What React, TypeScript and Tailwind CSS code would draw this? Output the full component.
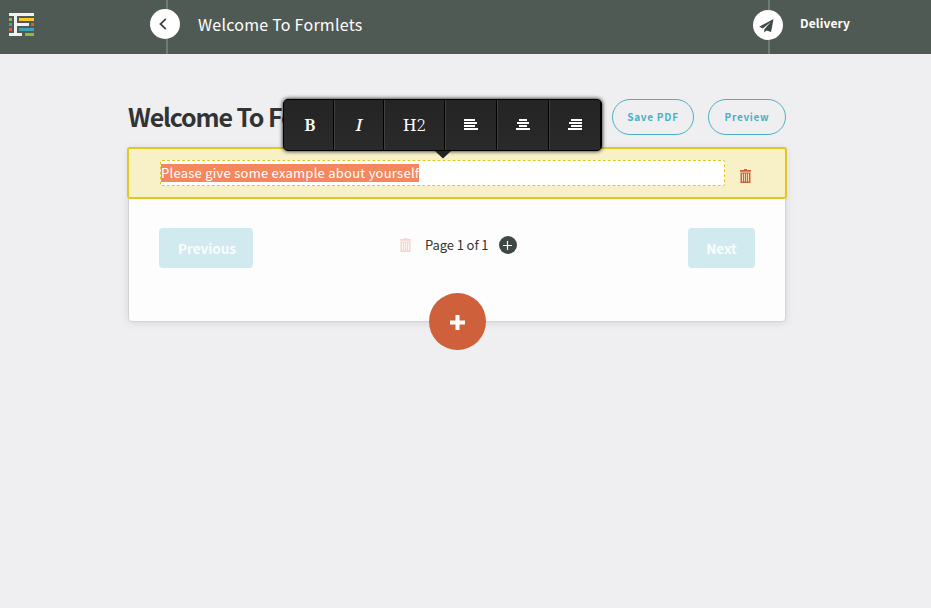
const source = "font-['Noto_Sans_CJK_SC','Open_Sans',sans-serif]";

function Logo() {
  const bars: [number, number, number, number, string][] = [
    [9, 13, 25, 3, "#f1f1f0"],
    [14, 13, 3, 23, "#f1f1f0"],
    [14, 23, 15, 3, "#f1f1f0"],
    [9, 33, 13, 3, "#f1f1f0"],
    [9, 18, 3, 3, "#8fba3c"],
    [9, 23, 3, 3, "#41a1b5"],
    [9, 28, 3, 3, "#ee5544"],
    [19, 18, 15, 3, "#fdc72f"],
    [31, 23, 3, 3, "#ee5544"],
    [19, 28, 15, 3, "#41a1b5"],
    [25, 33, 9, 3, "#8fba3c"],
  ];
  return (
    <svg width="25" height="23" viewBox="9 13 25 23" shapeRendering="crispEdges">
      {bars.map(([x, y, w, h, c]) => (
        <rect key={`${x}-${y}-${w}`} x={x} y={y} width={w} height={h} fill={c} />
      ))}
    </svg>
  );
}

function Trash({ className }: { className: string }) {
  return (
    <svg width="11" height="14" viewBox="0 0 11 14" fill="currentColor" className={className}>
      <path d="M4 0h3v1h4v1.7H0V1h4z" />
      <path fillRule="evenodd" d="M.5 3.4h10V14H.5zM2.1 4.6v8h.9v-8zM4.2 4.6v8h.8v-8zM6.1 4.6v8h.8v-8zM8 4.6v8h.9v-8z" />
    </svg>
  );
}

function AlignIcon({ rows }: { rows: [number, number][] }) {
  return (
    <svg width="14" height="11" viewBox="0 0 14 11" fill="#fff" shapeRendering="crispEdges" className="-mt-px">
      {rows.map(([x, w], i) => (
        <rect key={i} x={x} y={i * 3} width={w} height="2" />
      ))}
    </svg>
  );
}

function Toolbar() {
  const cell = "flex h-full items-center justify-center border-r border-black bg-linear-to-b from-[#242424] to-[#2a2a2a] leading-6";
  const sep = " border-l border-l-[#404040]";
  return (
    <div className="absolute top-[99px] left-[283px] z-10 h-[52px] w-[319px] rounded-[5px] border border-black bg-black shadow-[0_0_4px_#000] font-['Noto_Serif','Liberation_Serif',serif] text-[17px] text-white">
      <div className="flex h-full overflow-hidden rounded-[4px]">
        <div className={cell + " w-[50px] pl-[3px] font-semibold"}>B</div>
        <div className={cell + sep + " w-[50px] font-medium italic"}>I</div>
        <div className={cell + sep + " w-[61px]"}>
          H<span className="font-light">2</span>
        </div>
        <div className={cell + sep + " w-[52px]"}>
          <AlignIcon rows={[[0, 11], [0, 13], [0, 11], [0, 14]]} />
        </div>
        <div className={cell + sep + " w-[52px]"}>
          <AlignIcon rows={[[3, 8], [1, 12], [3, 8], [0, 14]]} />
        </div>
        <div className={cell + sep + " w-[52px]"}>
          <AlignIcon rows={[[3, 11], [1, 13], [3, 11], [0, 14]]} />
        </div>
      </div>
      <svg className="absolute top-[51px] left-[151px]" width="16" height="8" viewBox="0 0 16 8" fill="#242424">
        <path d="M0 0h16L8 7.5z" />
      </svg>
    </div>
  );
}

export default function App() {
  return (
    <div className={"relative h-[608px] w-[931px] overflow-hidden bg-[#efeff1] " + source}>
      <header className="flex h-[54px] bg-[#505a54] text-white">
        <div className="w-[150px] pt-[13px] pl-[9px]">
          <Logo />
        </div>
        <div className="h-full w-[30px] bg-linear-to-r from-transparent from-[16px] via-[#6d7d73] via-[16px] to-[#6d7d73] to-[18px] bg-[length:18px_100%] bg-no-repeat pt-[9px]">
          <div className="flex size-[30px] items-center justify-center rounded-full bg-white">
            <svg width="8" height="12" viewBox="0 0 8 12" fill="none" stroke="#3b4540" strokeWidth="1.8" className="mr-1">
              <path d="M6.8.8 1.5 6l5.3 5.2" />
            </svg>
          </div>
        </div>
        <div className="ml-[18px] w-[555px] whitespace-nowrap pt-[12px] text-[16px] leading-[25px] tracking-[0.25px]">Welcome To Formlets</div>
        <div className="h-full w-[30px] bg-linear-to-r from-transparent from-[15px] via-[#6d7d73] via-[15px] to-[#6d7d73] to-[17px] bg-[length:17px_100%] bg-no-repeat pt-[10px]">
          <div className="flex size-[30px] items-center justify-center rounded-full bg-white">
            <svg width="15" height="14" viewBox="0 0 15 14" fill="#3f4a44" className="mr-[3px] mt-px">
              <path d="M14.5 0 .2 7.7 3.8 9.5 12 2.8 5.3 10.3v3.2l2.2-2.1 4.6 1.6z" />
            </svg>
          </div>
        </div>
        <div className="ml-[17px] whitespace-nowrap pt-[13px] text-[12px] leading-5 font-bold tracking-[0.12px]">Delivery</div>
      </header>

      <main className="ml-[128px] w-[658px] pt-[45px]">
        <div className="flex h-9 items-center">
          <h1 className="-mt-[3px] w-[484px] whitespace-nowrap text-[25px] leading-9 font-bold tracking-[-1.15px] text-[#333]">Welcome To Formlets</h1>
          <button className="h-9 w-[82px] rounded-full border border-[#4bafc5] pb-[2px] text-[10px] font-bold tracking-[0.75px] text-[#4bafc5]">Save PDF</button>
          <button className="ml-[14px] h-9 w-[78px] rounded-full border border-[#4bafc5] pb-[2px] text-[10px] font-bold tracking-[0.7px] text-[#4bafc5]">Preview</button>
        </div>

        <section className="mt-[13px] h-[174px] rounded-[4px] border border-[#d3d3d5] bg-[#fdfdfd] shadow-[0_1px_8px_rgba(0,0,0,0.1)]">
          <div className="-mx-[2px] -mt-[2px] flex h-[52px] rounded-[3px] border-2 border-[#e0c91f] bg-[#f8f1c7] pt-[11px] pl-[31px]">
            <div className="h-[26px] w-[565px] rounded-[2px] border border-dashed border-[#dfc81e] bg-white pt-[3px]">
              <span className="block h-[18px] w-[258px] whitespace-nowrap bg-[#f4875e] text-[13px] leading-[18px] tracking-[0.25px] text-white">Please give some example about yourself</span>
            </div>
            <Trash className="mt-[8.5px] ml-[15px] text-[#cf603c]" />
          </div>
          <div className="mx-[30px] mt-[29px] flex h-10">
            <button className="h-10 w-[94px] rounded-[4px] bg-[#d1eaef] pl-[2px] text-[13.5px] font-bold text-[#fafdfd]">Previous</button>
            <Trash className="mt-[10px] ml-[147px] text-[#f5d5cc]" />
            <span className="ml-[14px] w-[74px] whitespace-nowrap pt-[8px] text-[13px] leading-[18px] tracking-[-0.1px] text-[#333]">Page 1 of 1</span>
            <span className="mt-[7.5px] flex size-[18px] items-center justify-center rounded-full bg-[#3f4944]">
              <svg width="10" height="10" viewBox="0 0 10 10" stroke="#fff" strokeWidth="1.2">
                <path d="M0 5.5h9M4.5 1v9" />
              </svg>
            </span>
            <button className="ml-auto h-10 w-[67px] rounded-[4px] bg-[#d1eaef] text-[13.5px] font-bold text-[#fafdfd]">Next</button>
          </div>
          <div className="mt-[25px] ml-[300px] flex size-[57px] items-center justify-center rounded-full bg-[#cf603c]">
            <svg width="15" height="15" viewBox="0 0 15 15" fill="#fff" className="mt-[2px]">
              <path d="M5.5 0h4v5.5H15v4H9.5V15h-4V9.5H0v-4h5.5z" />
            </svg>
          </div>
        </section>
      </main>
      <Toolbar />
    </div>
  );
}
